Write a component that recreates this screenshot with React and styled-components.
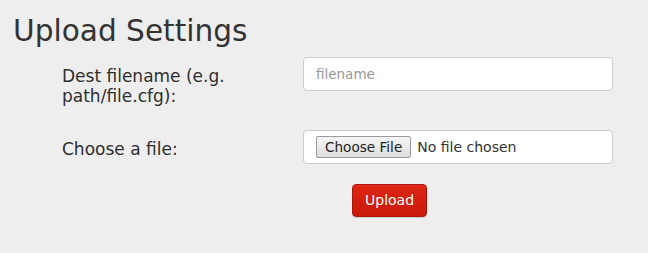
import React from 'react';
import styled, { createGlobalStyle } from 'styled-components';

const GlobalStyle = createGlobalStyle`
    html, body {
        margin: 0;
        padding: 0;
        background: #eeeeee;
    }
    body {
        font-family: "DejaVu Sans", Verdana, sans-serif;
        color: #333333;
    }
`;

const Page = styled.div`
    min-height: 100vh;
    background: #eeeeee;
`;

const Title = styled.h2`
    margin: 0;
    padding: 15px 0 0 13px;
    font-size: 29.6px;
    line-height: 33px;
    font-weight: normal;
    color: #333333;
`;

const Form = styled.form`
    display: flex;
    flex-direction: column;
    padding: 9px 0 0 62px;
`;

const Row = styled.div`
    display: flex;
    align-items: flex-start;
    margin-bottom: ${props => props.gap || 0}px;
`;

const Label = styled.label`
    width: 241px;
    padding-top: 9px;
    padding-right: 50px;
    box-sizing: border-box;
    font-size: 17px;
    line-height: normal;
    color: #2e2e2e;
`;

const Field = styled.div`
    width: 310px;
    height: 34px;
    box-sizing: border-box;
    background: #ffffff;
    border: 1px solid #cccccc;
    border-radius: 4px;
    padding: 6px 12px;
    display: flex;
    align-items: center;
`;

const TextInput = styled.input`
    border: 0;
    outline: none;
    padding: 0;
    width: 100%;
    background: transparent;
    font-family: "DejaVu Sans", Verdana, sans-serif;
    font-size: 13.5px;
    color: #333333;
    &::placeholder {
        color: #999999;
    }
`;

const FileInput = styled.input`
    font-family: "DejaVu Sans", Verdana, sans-serif;
    font-size: 14px;
    color: #333333;
    width: 100%;
    &::file-selector-button {
        font-family: "DejaVu Sans", Verdana, sans-serif;
        font-size: 13.6px;
        color: #222222;
        height: 22px;
        padding: 0 8px;
        margin-right: 6px;
        border: 1px solid #9a9a9a;
        border-radius: 2px;
        background: linear-gradient(#f6f6f6, #dddddd);
    }
`;

const Actions = styled.div`
    display: flex;
    padding-left: 290px;
`;

const Button = styled.button`
    font-family: "DejaVu Sans", Verdana, sans-serif;
    font-size: 14px;
    line-height: 19px;
    padding: 6px 12px;
    color: #ffffff;
    border: 1px solid #a8190b;
    border-radius: 4px;
    background: linear-gradient(#e62a1b, #dc2412 10%, #c9190b);
    box-shadow: 0 1px 1px rgba(0, 0, 0, 0.15);
`;

export default function App() {
    return (
        <Page>
            <GlobalStyle />
            <Title>Upload Settings</Title>
            <Form onSubmit={e => e.preventDefault()}>
                <Row gap={24}>
                    <Label htmlFor="dest">Dest filename (e.g. path/file.cfg):</Label>
                    <Field>
                        <TextInput id="dest" type="text" placeholder="filename" />
                    </Field>
                </Row>
                <Row gap={20}>
                    <Label htmlFor="file">Choose a file:</Label>
                    <Field>
                        <FileInput id="file" type="file" />
                    </Field>
                </Row>
                <Actions>
                    <Button type="submit">Upload</Button>
                </Actions>
            </Form>
        </Page>
    );
}
